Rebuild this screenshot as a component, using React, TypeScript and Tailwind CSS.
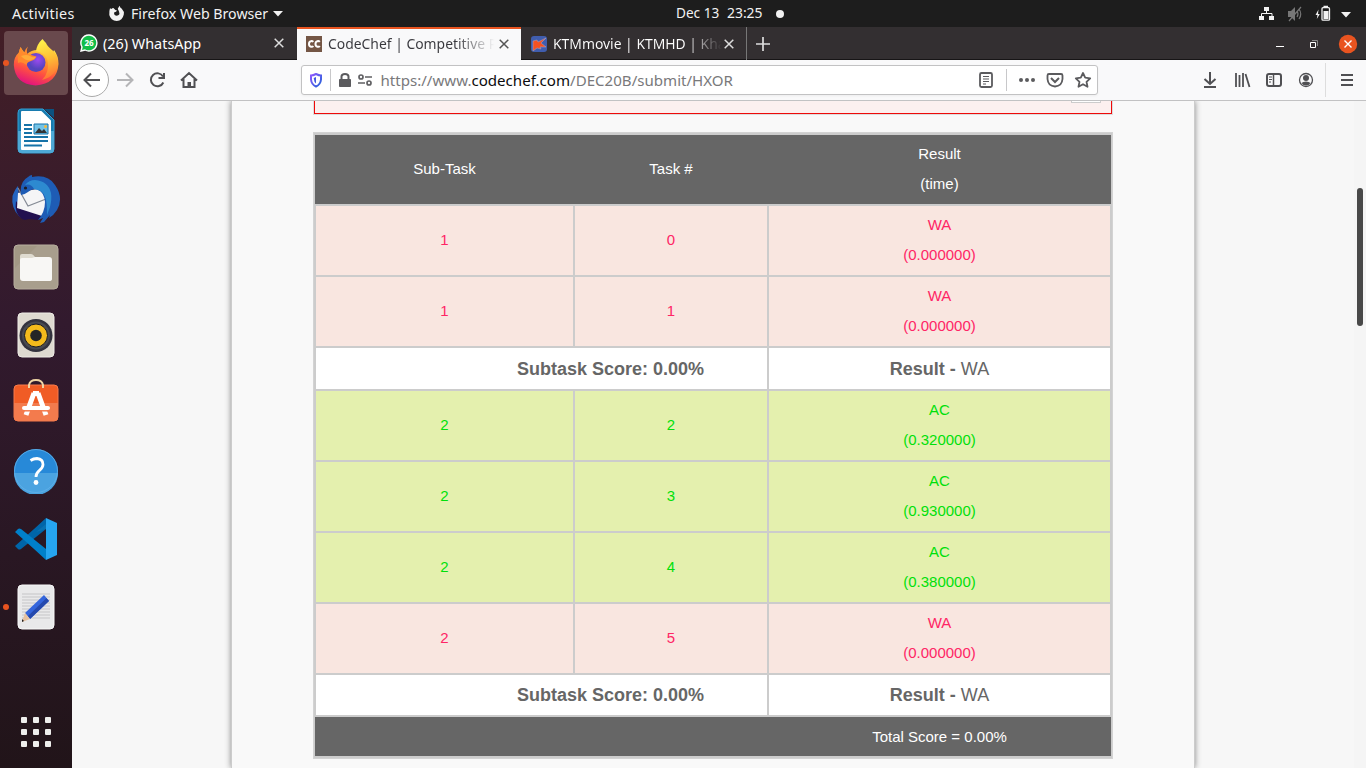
import React from "react";

type Kind = "wa" | "ac";
const rowTone: Record<Kind, string> = {
  wa: "bg-[#f9e6e0] text-[#ff2565]",
  ac: "bg-[#e4f0ae] text-[#00e00a]",
};

function TaskRow({ sub, task, kind, time }: { sub: number; task: number; kind: Kind; time: string }) {
  const tone = rowTone[kind];
  return (
    <div className="grid h-[69px] grid-cols-[257px_192px_341px] gap-[2px] text-center">
      <div className={"flex items-center justify-center pb-[2px] " + tone}>{sub}</div>
      <div className={"flex items-center justify-center pb-[2px] " + tone}>{task}</div>
      <div className={"flex flex-col justify-center pb-[2px] " + tone}>
        <span>{kind.toUpperCase()}</span>
        <span>({time})</span>
      </div>
    </div>
  );
}

function ScoreRow({ height }: { height: string }) {
  return (
    <div className={"grid grid-cols-[451px_341px] gap-[2px] text-[18px] text-[#666] " + height}>
      <div className="flex items-center justify-end bg-white pr-[63px] font-bold">Subtask Score: 0.00%</div>
      <div className="flex items-center justify-center bg-white whitespace-pre">
        <b>Result - </b>WA
      </div>
    </div>
  );
}

function ResultTable() {
  return (
    <div className="flex w-[800px] flex-col gap-[2px] border border-[#d3d3d3] bg-[#ccc] pt-[2px] pb-[2px] text-[15px] leading-[30px]">
      <div className="mx-px grid h-[69px] grid-cols-[259px_194px_343px] bg-[#666] text-center text-white">
        <div className="flex items-center justify-center pb-[2px]">Sub-Task</div>
        <div className="flex items-center justify-center pb-[2px]">Task #</div>
        <div className="flex flex-col justify-center pb-[2px]">
          <span>Result</span>
          <span>(time)</span>
        </div>
      </div>
      <div className="flex flex-col gap-[2px] px-[2px]">
        <TaskRow sub={1} task={0} kind="wa" time="0.000000" />
        <TaskRow sub={1} task={1} kind="wa" time="0.000000" />
        <ScoreRow height="h-[41px]" />
        <TaskRow sub={2} task={2} kind="ac" time="0.320000" />
        <TaskRow sub={2} task={3} kind="ac" time="0.930000" />
        <TaskRow sub={2} task={4} kind="ac" time="0.380000" />
        <TaskRow sub={2} task={5} kind="wa" time="0.000000" />
        <ScoreRow height="h-[40px]" />
      </div>
      <div className="mx-px flex h-[39px] items-center bg-[#666] text-white">
        <div className="ml-[453px] w-[343px] text-center">Total Score = 0.00%</div>
      </div>
    </div>
  );
}

function TopBar() {
  return (
    <div className="flex h-[27px] shrink-0 items-center bg-[#1d1d1d] text-[14px] text-[#f2f2f2]">
      <span className="ml-[12px] w-[96px] pt-px text-[14.3px] tracking-[0.3px]">Activities</span>
      <svg width="17" height="17" viewBox="0 0 17 17" className="shrink-0">
        <path d="M2 3.2 3.3 4.1Q4.2 3.2 5.4 3.1L7.4 5 9 5.4 8 6.8 6.3 7.2Q5.5 9 7 10.2 8.6 11.2 10.6 10 12 8.8 11 6.5L9.8 3.8 11.5.8Q12 3 13.8 3.8 16.5 6.5 15.8 9.6 14.5 15.7 8.7 16 2.7 15.6 1.3 10 1 6 2 3.2Z" fill="#f2f2f2" />
      </svg>
      <span className="ml-[6px] w-[142px] pt-px text-[14.2px] whitespace-nowrap">Firefox Web Browser</span>
      <svg width="10" height="6"><path d="M0 0h10L5 5.5Z" fill="#f2f2f2" /></svg>
      <span className="ml-[393px] w-[51px] text-[13.6px]">Dec 13</span>
      <span className="w-[49px] text-[13.9px]">23:25</span>
      <span className="size-[8px] rounded-full bg-[#f2f2f2]" />
      <svg className="ml-[474px]" width="108" height="18" viewBox="1258 4 108 18" fill="#f2f2f2">
        <path d="M1264 6h5v4h-5zM1259 15h5v4h-5zM1269 15h5v4h-5z" />
        <path d="M1266.500 9v4M1261.500 15v-2.500h10.500V15" fill="none" stroke="#f2f2f2" />
        <g fill="#777" stroke="none">
          <path d="M1288 10h3l4-4v14l-4-4h-3z" />
          <path d="M1297 10q2 3 0 6M1299 8q3.500 5 0 10M1289 20l12-14" fill="none" stroke="#777" strokeWidth="1.200" />
        </g>
        <path d="M1318.500 8.500 1315.500 14h2l-.7 4 3-5h-1.800z" />
        <rect x="1322" y="6.700" width="7.500" height="12.500" rx="1" fill="none" stroke="#f2f2f2" strokeWidth="1.300" />
        <path d="M1323.500 4.800h4.500v2h-4.500zM1323.500 10h5v8h-5zM1341 11h10l-5 5.500z" />
      </svg>
    </div>
  );
}

function Dock() {
  const tile = "flex size-[64px] shrink-0 items-center justify-center relative";
  return (
    <aside className="flex w-[72px] shrink-0 flex-col items-center gap-[4px] bg-gradient-to-b from-[#431e26] via-[#321a2e] via-40% to-[#211419] pt-[4px]">
      <div className={tile + " rounded-[4px] bg-[#69494d]"}>
        <span className="absolute top-[29px] -left-[1px] size-[6px] rounded-full bg-[#e95420]" />
        <svg width="48" height="48" viewBox="0 0 48 48">
          <defs>
            <linearGradient id="fx" x1=".8" y1="0" x2=".35" y2="1"><stop offset="0" stopColor="#fff44f" /><stop offset=".35" stopColor="#ff9a2c" /><stop offset=".65" stopColor="#ff5140" /><stop offset="1" stopColor="#e01081" /></linearGradient>
            <linearGradient id="fy" x1=".4" y1="0" x2=".6" y2="1"><stop offset="0" stopColor="#fff24a" /><stop offset=".5" stopColor="#ffbd35" /><stop offset="1" stopColor="#ff6d35" /></linearGradient>
            <radialGradient id="fp" cx=".6" cy=".35"><stop offset="0" stopColor="#9c4af0" /><stop offset="1" stopColor="#5544bd" /></radialGradient>
          </defs>
          <path d="M8.700 8Q7 11 7.500 13 1.500 18 1.800 26 3 45 23.500 46.500 45 45 46.500 25 46.500 17 42 11L40 16Q36 10 30 12 22 9 15 15 11 13 8.700 8Z" fill="url(#fx)" />
          <path d="M30.500 0Q25 5 24 12 33 14 35.500 21 38 33 30 41 45 37 46 23 45 14 40 11 35 7 34 4 32 2 30.500 0Z" fill="url(#fy)" />
          <circle cx="24" cy="23.500" r="9.500" fill="url(#fp)" />
          <path d="M16 7.500Q14 12 15.500 15L24.500 17.500Q23 21 19 22 15 23 14.500 26 10 22 6 24 5 16 8.700 8 10 12 12 14 13 10 16 7.500Z" fill="#ff8a2d" />
          <path d="M9 17q6-2 9 0 3 2 6 1-2 3-6 3.500-5 0-9-4.500Z" fill="#ffab38" />
        </svg>
      </div>
      <div className={tile}>
        <svg width="38" height="48" viewBox="0 0 38 48">
          <path d="M4 2h22l11 11v29q0 4-4 4H5q-4 0-4-4V6q0-4 3-4Z" fill="#187baf" stroke="#31a1d6" />
          <path d="M1 24h36v19q0 3-4 3H5q-4 0-4-3Z" fill="#4ea9d6" />
          <path d="M5 5h19l9 9v28H5Z" fill="#fff" stroke="#fff" strokeWidth="2" strokeLinejoin="round" />
          <path d="M27 2h10v9z" fill="#0c5280" />
          <path d="M7 18h8M7 22h8M7 26h8M7 30h24M7 34h24M7 38.500h18" stroke="#1673a8" strokeWidth="2" />
          <path d="M17 17h14v10H17z" fill="#74c4e8" stroke="#1673a8" />
          <path d="m18 26 4-5 3 3 2-2 3 4z" fill="#333" /><circle cx="28.500" cy="19.500" r="1.500" fill="#f5b83d" />
        </svg>
      </div>
      <div className={tile}>
        <svg width="50" height="50" viewBox="0 0 50 50">
          <path d="M7 12Q4 15 1.500 22 0 34 8 42l4 3-2-6 3-2L8 22Z" fill="#2464c0" />
          <path d="M11 45Q3 39 5 27l6 8 22 6q-3 4-6 5l-9-1-4 1Z" fill="#22104f" />
          <path d="M7 19 34 13q4 13 0 28l-3 1L6 34Z" fill="#f5f5f6" />
          <path d="m7 19 10 18 18-7" fill="none" stroke="#858b95" strokeWidth="1.200" transform="translate(0 -5)" />
          <path d="M10 21Q8 8 17 3q2-2 4-2v2q16-3 23 8 9 13 2 25-3 5-8 8l1-3-6 7-4 1 3-5-5 2q7-8 7-18-1-10-7-12-6-2-10 2-4 3-7 3Z" fill="#1e5cb5" />
          <path d="M24 6q13 1 16 13 1 6-1 14l-3 8q0-14-2-18-2-7-11-8-3-6-9-4 4-5 10-5Z" fill="#3399da" opacity=".75" />
          <circle cx="14.500" cy="14" r="1.600" fill="#1c1c25" />
        </svg>
      </div>
      <div className={tile}>
        <svg width="46" height="46" viewBox="0 0 46 46">
          <rect x="1" y="1" width="44" height="44" rx="4" fill="#a29885" stroke="#b8af9f" />
          <path d="M1 25 25 1h16q4 0 4 4v36q0 4-4 4H5q-4 0-4-4Z" fill="#b0a796" opacity=".45" />
          <path d="M7 12q0-2 2-2h9q2 0 4 3H36v10H7Z" fill="#dfdbd0" />
          <path d="M7 16q0-2 2-2h10l3-1h14q3 0 3 3v19q0 2-3 2H10q-3 0-3-3Z" fill="#f8f7f5" />
        </svg>
      </div>
      <div className={tile}>
        <svg width="38" height="46" viewBox="0 0 38 46">
          <rect x="1" y="1" width="36" height="44" rx="4" fill="#dedad0" stroke="#eeece6" />
          <circle cx="19" cy="23.500" r="16.500" fill="#33333e" /><circle cx="19" cy="23.500" r="14" fill="#484b52" />
          <circle cx="19" cy="23.500" r="11.500" fill="#f3bb1c" stroke="#171a25" strokeWidth="1" />
          <circle cx="19" cy="23.500" r="5.800" fill="#252526" />
        </svg>
      </div>
      <div className={tile}>
        <svg className="overflow-visible" width="46" height="46" viewBox="0 4 46 46">
          <rect x="1" y="9" width="44" height="36" rx="4" fill="#f05c25" stroke="#f77b4c" />
          <path d="M1 27h44v14q0 4-4 4H5q-4 0-4-4Z" fill="#f37b4d" />
          <path d="M16 12V9q1-5 7-5t7 5v3" fill="none" stroke="#efd5a5" strokeWidth="2" />
          <path d="m21 17-8 22M25 17l8 22" stroke="#fff" strokeWidth="5" /><path d="M20 15h6v5h-6z" fill="#fff" />
          <path d="M10 34.800h26" stroke="#f37b4d" strokeWidth="1.500" />
          <path d="M11 32h24" stroke="#fff" strokeWidth="4" strokeLinecap="round" />
        </svg>
      </div>
      <div className={tile}>
        <svg width="46" height="46" viewBox="0 0 46 46">
          <circle cx="23" cy="23" r="22" fill="#2789d8" />
          <path d="M1 25h44a22 22 0 0 1-44 0Z" fill="#4ba3e0" />
          <circle cx="23" cy="23" r="21.500" fill="none" stroke="#62b1e8" strokeWidth=".8" />
          <path d="M17.500 12.500q3-2 6.500-2 6 .5 6 6 0 3-3.500 5.800-3.500 2.700-3.500 6.700" fill="none" stroke="#fff" strokeWidth="2.800" /><circle cx="23" cy="34.500" r="2.400" fill="#fff" />
        </svg>
      </div>
      <div className={tile}>
        <svg width="44" height="44" viewBox="0 0 44 44">
          <path d="m1 29 3 3q1 1 3 0l25-20V1Q18 14 1 29Z" fill="#0065a9" />
          <path d="m1 15 3-3q1-1 3 0l25 20v11Q18 30 1 15Z" fill="#0080ca" />
          <path d="m32 1 11 5v32l-11 5Z" fill="#26a5f0" /><path d="m22 15 10-8v5z" fill="#0870b0" />
        </svg>
      </div>
      <div className={tile}>
        <span className="absolute top-[29px] -left-[1px] size-[6px] rounded-full bg-[#e95420]" />
        <svg width="38" height="46" viewBox="0 0 38 46">
          <rect x="1" y="1" width="36" height="44" rx="4" fill="#e9e9ea" stroke="#f8f8f8" />
          <path d="M5 10h28M5 13h28M5 16h28M5 19h28M5 22h28M5 25h28M5 28h28M5 31h28M5 34h28" stroke="#c5c5c7" />
          <path d="m27 11 5 6-19 18-5-6Z" fill="#3465dc" /><path d="m29.500 14 2.500 3-19 18-2-3Z" fill="#2549ad" />
          <path d="m8 29 5 6-8 3Z" fill="#e5c1a0" /><path d="m5 35 2 2-2 1Z" fill="#222" />
        </svg>
      </div>
      <div className="mt-[74px] grid grid-cols-3 gap-[6px]">
        {Array.from({ length: 9 }, (_, i) => <span key={i} className="size-[6px] rounded-[1px] bg-[#eeeeec]" />)}
      </div>
    </aside>
  );
}

function Cross({ color = "#ddd" }: { color?: string }) {
  return <svg className="shrink-0" width="10" height="10"><path d="m.7.7 8.600 8.600m0-8.600L.7 9.300" stroke={color} strokeWidth="1.500" /></svg>;
}

function TabStrip() {
  return (
    <div className="flex h-[33px] shrink-0 items-center bg-[#332f31] text-[14px] text-white shadow-[inset_0_-1px_#171516]">
      <div className="flex w-[225px] items-center pl-[8px]">
        <svg width="18" height="18" viewBox="0 0 18 18"><path d="M9 1a8 8 0 1 1-4 15l-4 1 1-4A8 8 0 0 1 9 1Z" fill="#12bd48" stroke="#fff" strokeWidth="1.400" /><text x="9" y="12" textAnchor="middle" fontSize="8" fontWeight="bold" fill="#fff" fontFamily="Noto Sans">26</text></svg>
        <span className="ml-[5px] w-[171px] pt-px text-[14.400px]">(26) WhatsApp</span>
        <Cross />
      </div>
      <div className="flex h-[33px] w-[224px] items-center border-t-2 border-[#e95420] bg-[#f9f9fa] pb-[2px] pl-[9px] text-[#38383d]">
        <svg className="shrink-0" width="16" height="16"><rect width="16" height="16" fill="#745645" /><path d="M7.300 5.800Q6.300 4.700 4.800 5.200 3 5.600 3 8t2 2.800q1.500.3 2.300-.8M13.800 5.800q-1-1.100-2.500-.6-1.800.4-1.800 2.800t2 2.800q1.500.3 2.300-.8" fill="none" stroke="#fff" strokeWidth="2" /></svg>
        <span className="ml-[6px] w-[170px] bg-gradient-to-r from-[#38383d] from-75% to-transparent to-98% bg-clip-text pt-px text-[13.900px] whitespace-nowrap text-transparent">CodeChef | Competitive P</span>
        <span className="ml-[1px] flex"><Cross color="#555" /></span>
      </div>
      <div className="flex h-[33px] w-[226px] items-center border-r border-[#777] pl-[10px]">
        <svg className="shrink-0" width="16" height="16"><rect width="16" height="16" rx="3" fill="#405dae" /><path d="m2 5 4-1 1 2 8-4-5 5 5 4-6 0 1 2-4-1-4 3Z" fill="#f45123" stroke="#a8a9c8" strokeWidth=".5" /></svg>
        <span className="ml-[6px] w-[169px] bg-gradient-to-r from-white from-78% to-transparent to-100% bg-clip-text pt-px text-[13.900px] whitespace-nowrap text-transparent">KTMmovie | KTMHD | Kha</span>
        <span className="ml-[2px] flex"><Cross /></span>
      </div>
      <svg className="ml-[9px]" width="14" height="14"><path d="M7 0v14M0 7h14" stroke="#ddd" strokeWidth="1.700" /></svg>
      <svg className="ml-auto" width="98" height="28" viewBox="1268 30 98 28">
        <path d="M1276 46.500h8" stroke="#fff" />
        <path d="M1310.500 42.500h5v5h-5z" fill="none" stroke="#fff" /><path d="M1312 40.500h5.500V46" fill="none" stroke="#888" />
        <circle cx="1348" cy="44" r="9.200" fill="#e95420" /><path d="m1344.500 40.500 7 7m0-7-7 7" stroke="#fff" strokeWidth="1.400" />
      </svg>
    </div>
  );
}

function Toolbar() {
  return (
    <div className="flex h-[41px] shrink-0 items-center border-b border-[#c2c2c3] bg-[#f9f9fa]">
      <svg width="229" height="40" viewBox="72 60 229 40" fill="none" stroke="#505053" strokeWidth="2">
        <circle cx="92" cy="80" r="16.500" fill="#fff" stroke="#aaa" strokeWidth="1" />
        <path d="M100 80H85m6-6.500L84.500 80l6.500 6.500" />
        <path d="M117 80h15m-6-6.500 6.500 6.500-6.500 6.500" stroke="#b5b5b7" />
        <path d="M163 76.500a6.500 6.500 0 1 0 .3 6M164 73v5h-5.500" />
        <path d="m181 80.500 8-7.500 8 7.500M183.500 79v8h11v-8M188.500 87v-4h1.500v4" />
      </svg>
      <div className="flex h-[30px] w-[797px] items-center rounded-[3px] border border-[#c2c2c3] bg-white shadow-[0_1px_3px_#0000000d]">
        <svg className="shrink-0" width="78" height="28" viewBox="302 66 78 28">
          <defs><linearGradient id="shield" x1="0" y1="0" x2="1" y2="1"><stop stopColor="#9059ff" /><stop offset="1" stopColor="#2362d8" /></linearGradient></defs>
          <path d="M316 74q-3 1.500-5 1.500v4q.5 5 5 7 4.500-2 5-7v-4q-2 0-5-1.500Z" fill="none" stroke="url(#shield)" strokeWidth="2" />
          <path d="M316 77v6.500q-2-1.500-2.200-5V78Z" fill="#4258de" />
          <path d="M330.500 69v22" stroke="#c8c8ca" />
          <path d="M339.500 79.500h11v7h-11z" fill="#5b5b5e" stroke="#5b5b5e" strokeLinejoin="round" /><path d="M341.500 80v-3.500q0-2.500 3.500-2.500t3.500 2.500V80" fill="none" stroke="#5b5b5e" strokeWidth="2" />
          <g fill="none" stroke="#606063" strokeWidth="1.700"><circle cx="361" cy="77" r="2" /><path d="M365 77h7M358 83h7" /><circle cx="369" cy="83" r="2" /></g>
        </svg>
        <div className="w-[596px] pt-px pl-[0.500px] text-[15.080px] whitespace-nowrap text-[#79797b]">https://www.<span className="text-[#0c0c0d]">codechef.com</span>/DEC20B/submit/HXOR</div>
        <svg className="shrink-0" width="121" height="28" viewBox="976 66 121 28" fill="none" stroke="#5b5b5e" strokeWidth="1.800">
          <rect x="980" y="73" width="12" height="14" rx="1.500" /><path d="M983 76.500h6M983 79h6M983 81.500h6M983 84h3" strokeWidth="1" />
          <path d="M1006.500 69v22" stroke="#c8c8ca" strokeWidth="1" />
          <g fill="#5b5b5e" stroke="none"><circle cx="1021" cy="80" r="2" /><circle cx="1027" cy="80" r="2" /><circle cx="1033" cy="80" r="2" /></g>
          <path d="M1049 74h12q1.500 0 1.500 1.500v3.500q-.5 7-7.500 7.500-7-.5-7.500-7.500v-3.500q0-1.500 1.500-1.500Z" /><path d="m1051 78 4 4 4-4" strokeWidth="2" />
          <path d="m1083 73 2.200 4.700 5 .6-3.700 3.500 1 5-4.500-2.600-4.500 2.600 1-5-3.700-3.500 5-.6Z" strokeLinejoin="round" />
        </svg>
      </div>
      <svg className="ml-auto" width="268" height="40" viewBox="1098 60 268 40" fill="none" stroke="#505053" strokeWidth="2">
        <path d="M1210 72v12m-5.500-5 5.500 5 5.500-5M1204 87h12" />
        <path d="M1236 73v14M1239.500 75v12M1243 73v14M1245.500 74l4 13" strokeWidth="1.800" />
        <rect x="1267" y="74" width="14" height="12" rx="2" /><path d="M1273.500 74v12" strokeWidth="1.500" /><path d="M1269 77h3M1269 79.500h3M1269 82h2" strokeWidth="1" />
        <circle cx="1306" cy="80" r="6.500" strokeWidth="1.300" /><circle cx="1306" cy="78" r="3" fill="#505053" stroke="none" /><path d="M1301.500 83q1.500-1.500 4.500-1.500t4.500 1.500q-1.500 2.500-4.500 2.500t-4.500-2.500Z" fill="#505053" stroke="none" />
        <path d="M1325.500 63v34" stroke="#ddd" strokeWidth="1" />
        <path d="M1341 75h12M1341 80h12M1341 85h12" />
      </svg>
    </div>
  );
}

export default function App() {
  return (
    <div className="flex h-[768px] w-[1366px] flex-col overflow-hidden font-['Noto_Sans',sans-serif]">
      <TopBar />
      <div className="flex min-h-0 flex-1">
        <Dock />
        <div className="flex min-w-0 flex-1 flex-col">
          <TabStrip />
          <Toolbar />
          <div className="flex min-h-0 flex-1 overflow-hidden bg-[#f7f7f7] font-['Liberation_Sans',Arial,sans-serif]">
            <main className="ml-[159px] w-[964px] shrink-0 border-x border-[#ccc] bg-[#f9f9f9] pl-[81px] shadow-[0_0_6px_#888]">
              <div className="flex h-[14px] w-[800px] justify-end border-x border-b border-[#ddd]">
                <div className="flex h-[13px] w-full justify-end border-x border-b border-[#ee0a0a] bg-[#fcf0ef]">
                  <div className="mr-[10px] h-[2px] w-[30px] border-x border-b border-[#ccc] bg-white" />
                </div>
              </div>
              <div className="mt-[17px]"><ResultTable /></div>
            </main>
            <div className="ml-auto w-[12px] bg-[#f5f5f5] pt-[87px] pl-[3px]">
              <div className="h-[138px] w-[6px] rounded-full bg-[#494949]" />
            </div>
          </div>
        </div>
      </div>
    </div>
  );
}
